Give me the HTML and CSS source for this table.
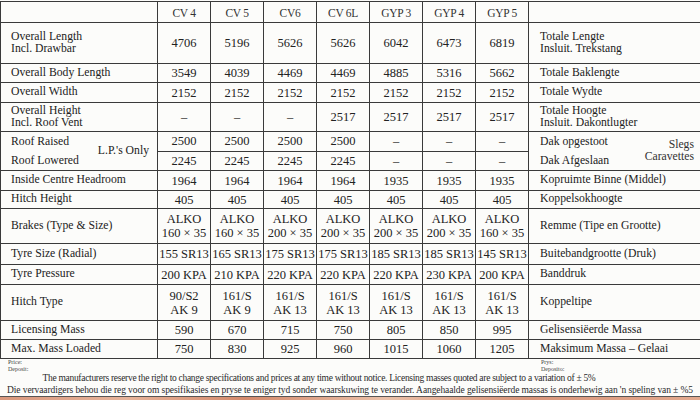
FILE: index.html
```html
<!DOCTYPE html>
<html>
<head>
<meta charset="utf-8">
<link rel="stylesheet" href="styles.css">
</head>
<body>
<div class="sheet">
<table class="spec">
  <colgroup>
    <col class="c-label"><col class="c-val"><col class="c-val"><col class="c-val"><col class="c-val"><col class="c-val"><col class="c-val"><col class="c-val"><col class="c-af">
  </colgroup>
  <tr class="r-head">
    <th></th><th>CV 4</th><th>CV 5</th><th>CV6</th><th>CV 6L</th><th>GYP 3</th><th>GYP 4</th><th>GYP 5</th><th></th>
  </tr>
  <tr class="r-ol">
    <td class="lbl">Overall Length<br>Incl. Drawbar</td><td>4706</td><td>5196</td><td>5626</td><td>5626</td><td>6042</td><td>6473</td><td>6819</td><td class="af">Totale Lengte<br>Insluit. Trekstang</td>
  </tr>
  <tr class="r-19">
    <td class="lbl">Overall Body Length</td><td>3549</td><td>4039</td><td>4469</td><td>4469</td><td>4885</td><td>5316</td><td>5662</td><td class="af">Totale Baklengte</td>
  </tr>
  <tr class="r-20">
    <td class="lbl">Overall Width</td><td>2152</td><td>2152</td><td>2152</td><td>2152</td><td>2152</td><td>2152</td><td>2152</td><td class="af">Totale Wydte</td>
  </tr>
  <tr class="r-oh">
    <td class="lbl">Overall Height<br>Incl. Roof Vent</td><td>–</td><td>–</td><td>–</td><td>2517</td><td>2517</td><td>2517</td><td>2517</td><td class="af">Totale Hoogte<br>Insluit. Dakontlugter</td>
  </tr>
  <tr class="r-19">
    <td class="lbl roof" rowspan="2">
      <div class="roof-wrap">
        <div class="roof-names"><div>Roof Raised</div><div>Roof Lowered</div></div>
        <div class="roof-note">L.P.'s Only</div>
      </div>
    </td>
    <td>2500</td><td>2500</td><td>2500</td><td>2500</td><td>–</td><td>–</td><td>–</td>
    <td class="af roof" rowspan="2">
      <div class="roof-wrap">
        <div class="roof-names"><div>Dak opgestoot</div><div>Dak Afgeslaan</div></div>
        <div class="slegs"><div>Slegs</div><div>Caravettes</div></div>
      </div>
    </td>
  </tr>
  <tr class="r-19">
    <td>2245</td><td>2245</td><td>2245</td><td>2245</td><td>–</td><td>–</td><td>–</td>
  </tr>
  <tr class="r-20">
    <td class="lbl">Inside Centre Headroom</td><td>1964</td><td>1964</td><td>1964</td><td>1964</td><td>1935</td><td>1935</td><td>1935</td><td class="af">Kopruimte Binne (Middel)</td>
  </tr>
  <tr class="r-18">
    <td class="lbl">Hitch Height</td><td>405</td><td>405</td><td>405</td><td>405</td><td>405</td><td>405</td><td>405</td><td class="af">Koppelsokhoogte</td>
  </tr>
  <tr class="r-35">
    <td class="lbl">Brakes (Type &amp; Size)</td><td>ALKO<br>160 × 35</td><td>ALKO<br>160 × 35</td><td>ALKO<br>200 × 35</td><td>ALKO<br>200 × 35</td><td>ALKO<br>200 × 35</td><td>ALKO<br>200 × 35</td><td>ALKO<br>160 × 35</td><td class="af">Remme (Tipe en Grootte)</td>
  </tr>
  <tr class="r-21">
    <td class="lbl">Tyre Size (Radial)</td><td>155 SR13</td><td>165 SR13</td><td>175 SR13</td><td>175 SR13</td><td>185 SR13</td><td>185 SR13</td><td>145 SR13</td><td class="af">Buitebandgrootte (Druk)</td>
  </tr>
  <tr class="r-20">
    <td class="lbl">Tyre Pressure</td><td>200 KPA</td><td>210 KPA</td><td>220 KPA</td><td>220 KPA</td><td>220 KPA</td><td>230 KPA</td><td>200 KPA</td><td class="af">Banddruk</td>
  </tr>
  <tr class="r-36">
    <td class="lbl">Hitch Type</td><td>90/S2<br>AK 9</td><td>161/S<br>AK 9</td><td>161/S<br>AK 13</td><td>161/S<br>AK 13</td><td>161/S<br>AK 13</td><td>161/S<br>AK 13</td><td>161/S<br>AK 13</td><td class="af">Koppeltipe</td>
  </tr>
  <tr class="r-19">
    <td class="lbl">Licensing Mass</td><td>590</td><td>670</td><td>715</td><td>750</td><td>805</td><td>850</td><td>995</td><td class="af">Gelisensiëerde Massa</td>
  </tr>
  <tr class="r-19">
    <td class="lbl">Max. Mass Loaded</td><td>750</td><td>830</td><td>925</td><td>960</td><td>1015</td><td>1060</td><td>1205</td><td class="af">Maksimum Massa – Gelaai</td>
  </tr>
</table>
<div class="foot">
  <div class="price-row">
    <div class="tiny"><div>Price:</div><div>Deposit:</div></div>
    <div class="tiny"><div>Prys:</div><div>Deposito:</div></div>
  </div>
  <p class="note note-en">The manufacturers reserve the right to change specifications and prices at any time without notice. Licensing masses quoted are subject to a variation of ± 5%</p>
  <p class="note note-af">Die vervaardigers behou die reg voor om spesifikasies en pryse te eniger tyd sonder waarskuwing te verander. Aangehaalde gelisensiëerde massas is onderhewig aan 'n speling van ± %5</p>
</div>
<div class="paper-edge"></div>
</div>
</body>
</html>
```
FILE: styles.css
```css
html, body {
  margin: 0;
  padding: 0;
}
body {
  width: 700px;
  height: 400px;
  overflow: hidden;
  background: #fcfcfa;
  font-family: "Liberation Serif", "Times New Roman", serif;
  color: #222;
}
.sheet {
  width: 700px;
  height: 400px;
  overflow: hidden;
}
.spec {
  border-collapse: collapse;
  table-layout: fixed;
  width: 704px;
  margin-top: 1px;
}
.c-label { width: 157px; }
.c-val { width: 53px; }
.c-af { width: 176px; }
.spec th,
.spec td {
  border: 1px solid #3a3a3a;
  padding: 0;
  font-weight: normal;
  font-size: 12.5px;
  line-height: 14px;
  text-align: center;
  vertical-align: middle;
  white-space: nowrap;
  overflow: hidden;
}
.spec th {
  font-size: 11.5px;
  letter-spacing: -0.3px;
  color: #333;
  padding-top: 2px;
}
.spec .lbl,
.spec .af {
  text-align: left;
  padding-left: 10px;
  font-size: 11.7px;
  line-height: 12.5px;
}
.spec .af {
  padding-left: 11px;
}
.r-head { height: 21px; }
.r-ol { height: 41px; }
.r-oh { height: 29px; }
.r-18 { height: 18px; }
.r-19 { height: 19px; }
.r-20 { height: 20px; }
.r-21 { height: 21px; }
.r-35 { height: 35px; }
.r-36 { height: 36px; }
.roof-wrap {
  display: flex;
  align-items: center;
  justify-content: space-between;
  padding-right: 8px;
}
.roof-names div {
  height: 19px;
  line-height: 19px;
}
.slegs {
  text-align: right;
  font-size: 11.7px;
  line-height: 12px;
  padding-right: 2px;
  color: #333;
}
.foot {
  height: 37px;
  border-bottom: 1px solid #555;
}
.price-row {
  display: grid;
  grid-template-columns: 533px auto;
  padding-left: 8px;
  height: 13px;
}
.tiny {
  font-size: 6px;
  line-height: 6.5px;
  color: #444;
}
.note {
  margin: 0;
  text-align: center;
  font-size: 9.5px;
  line-height: 12px;
  letter-spacing: -0.3px;
  white-space: nowrap;
  color: #2a2a2a;
}
.note-en {
  padding-right: 62px;
}
.note-af {
  letter-spacing: -0.1px;
}
.paper-edge {
  height: 5px;
  background: linear-gradient(90deg, #d9977c 0%, #e6b39a 18%, #d48a6c 35%, #eac0a8 55%, #d8957a 75%, #e3a98e 100%);
}
```
